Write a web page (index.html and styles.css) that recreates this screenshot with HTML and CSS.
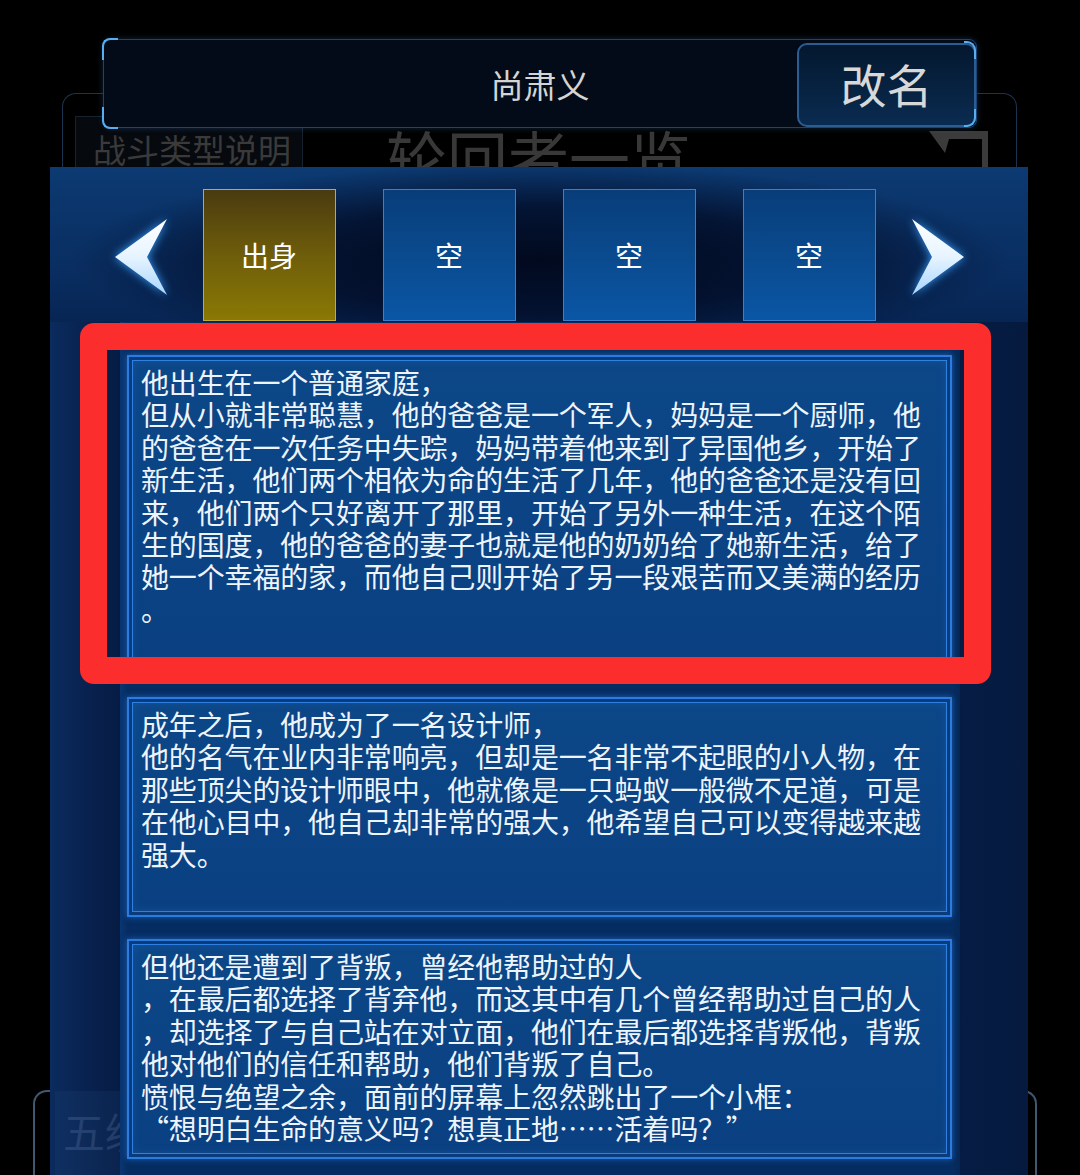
FILE: index.html
```html
<!DOCTYPE html>
<html lang="zh-CN">
<head>
    <meta charset="UTF-8">
    <meta name="viewport" content="width=device-width, initial-scale=1.0">
    <title>轮回者一览</title>
    <link rel="stylesheet" href="styles.css">
</head>
<body>
    <div class="screen">
        <!-- window underneath: the roster list -->
        <div class="window-back">
            <div class="back-tab">战斗类型说明</div>
            <div class="back-title">轮回者一览</div>
            <svg class="back-icon" viewBox="0 0 60 40" width="60" height="40">
                <path d="M0 0 H59 V40 H53 V8 H20 L16 22 Z" fill="#3b3b3b"/>
            </svg>
        </div>
        <div class="window-low"></div>

        <div class="name-bar">
            <span></span>
            <span class="name">尚肃义</span>
            <button class="rename">改名</button>
        </div>

        <div class="panel">
            <div class="ghost-label">五级</div>

            <div class="tabs">
                <svg class="arrow" viewBox="0 0 52 76" width="52" height="76">
                    <defs>
                        <linearGradient id="arrowFill" x1="0" y1="0" x2="0" y2="1">
                            <stop offset="0" stop-color="#ffffff"/>
                            <stop offset="0.5" stop-color="#e6f4ff"/>
                            <stop offset="1" stop-color="#a9d5ff"/>
                        </linearGradient>
                    </defs>
                    <polygon points="52,0 0,38 52,76 32,38" fill="url(#arrowFill)"/>
                </svg>
                <div class="tab-group">
                    <div class="tab tab-active">出身</div>
                    <div class="tab">空</div>
                    <div class="tab">空</div>
                    <div class="tab">空</div>
                </div>
                <svg class="arrow" viewBox="0 0 52 76" width="52" height="76">
                    <polygon points="0,0 52,38 0,76 20,38" fill="url(#arrowFill)"/>
                </svg>
            </div>

            <div class="stories">
                <div class="story story-long">他出生在一个普通家庭，<br>但从小就非常聪慧，他的爸爸是一个军人，妈妈是一个厨师，他<br>的爸爸在一次任务中失踪，妈妈带着他来到了异国他乡，开始了<br>新生活，他们两个相依为命的生活了几年，他的爸爸还是没有回<br>来，他们两个只好离开了那里，开始了另外一种生活，在这个陌<br>生的国度，他的爸爸的妻子也就是他的奶奶给了她新生活，给了<br>她一个幸福的家，而他自己则开始了另一段艰苦而又美满的经历<br>。</div>
                <div class="story">成年之后，他成为了一名设计师，<br>他的名气在业内非常响亮，但却是一名非常不起眼的小人物，在<br>那些顶尖的设计师眼中，他就像是一只蚂蚁一般微不足道，可是<br>在他心目中，他自己却非常的强大，他希望自己可以变得越来越<br>强大。</div>
                <div class="story">但他还是遭到了背叛，曾经他帮助过的人<br>，在最后都选择了背弃他，而这其中有几个曾经帮助过自己的人<br>，却选择了与自己站在对立面，他们在最后都选择背叛他，背叛<br>他对他们的信任和帮助，他们背叛了自己。<br>愤恨与绝望之余，面前的屏幕上忽然跳出了一个小框：<br>“想明白生命的意义吗？想真正地……活着吗？”</div>
            </div>
        </div>

        <div class="highlight"></div>
    </div>
</body>
</html>
```

FILE: styles.css
```css
body {
    margin: 0;
    background-color: #000;
    font-family: "Noto Sans CJK SC", "Noto Sans", sans-serif;
}

.screen {
    position: relative;
    width: 1080px;
    height: 1175px;
    padding-top: 39px;
    box-sizing: border-box;
    overflow: hidden;
}

/* ---- window underneath ---- */
.window-back {
    position: absolute;
    left: 62px;
    top: 93px;
    width: 955px;
    height: 200px;
    border: 1px solid #1c3350;
    border-bottom: none;
    border-radius: 14px 14px 0 0;
    box-sizing: border-box;
}

.back-tab {
    position: absolute;
    left: 12px;
    top: 22px;
    width: 228px;
    height: 70px;
    padding: 10px 0 0 17px;
    box-sizing: border-box;
    border: 1px solid #17222e;
    background-color: #06090e;
    color: #3a3a3a;
    font-size: 33px;
    line-height: 44px;
}

.back-title {
    position: absolute;
    left: 323px;
    top: 32px;
    color: #383838;
    font-size: 61px;
    line-height: 61px;
}

.back-icon {
    position: absolute;
    left: 866px;
    top: 37px;
}

.window-low {
    position: absolute;
    left: 33px;
    top: 1090px;
    width: 1004px;
    height: 120px;
    border: 2px solid rgba(130, 175, 225, 0.5);
    border-bottom: none;
    border-radius: 14px 14px 0 0;
    box-sizing: border-box;
}

/* ---- name bar ---- */
.name-bar {
    position: relative;
    z-index: 2;
    display: grid;
    grid-template-columns: 179px 1fr 179px;
    align-items: center;
    height: 89px;
    margin: 0 103px;
    border: 1.5px solid #1c4470;
    border-radius: 8px;
    background-color: #020b17;
    box-shadow: 0 0 6px rgba(40, 110, 190, 0.35);
    box-sizing: border-box;
}

.name-bar::before,
.name-bar::after {
    content: "";
    position: absolute;
    left: -2px;
    width: 14px;
    height: 20px;
    border-left: 2px solid #5aaef0;
}

.name-bar::before {
    top: -2px;
    border-top: 2px solid #5aaef0;
    border-top-left-radius: 8px;
}

.name-bar::after {
    bottom: -2px;
    border-bottom: 2px solid #5aaef0;
    border-bottom-left-radius: 8px;
}

.name {
    text-align: center;
    color: #d4d4d4;
    font-size: 33px;
    line-height: 40px;
}

.rename {
    position: relative;
    justify-self: end;
    width: 179px;
    height: 84px;
    margin-top: 2px;
    border: 2px solid #2c5d92;
    border-radius: 10px;
    background: linear-gradient(#04182f, #0a2b50);
    color: #d8d8d8;
    font-family: inherit;
    font-size: 46px;
    line-height: 1;
    padding: 0 0 4px;
}

.rename::before,
.rename::after {
    content: "";
    position: absolute;
    right: -2px;
    width: 10px;
    height: 16px;
    border-right: 2px solid #5aaef0;
}

.rename::before {
    top: -4px;
    border-top: 2px solid #5aaef0;
    border-top-right-radius: 9px;
}

.rename::after {
    bottom: -2px;
    border-bottom: 2px solid #5aaef0;
    border-bottom-right-radius: 9px;
}

/* ---- main panel ---- */
.panel {
    position: relative;
    z-index: 1;
    width: 978px;
    height: 1008px;
    margin: 39px 0 0 50px;
    display: flex;
    flex-direction: column;
    background: linear-gradient(90deg, #0b2b5e 0, #071f4a 50px, #061c44 70px, #061c44 910px, #051a3e 978px);
}

.ghost-label {
    position: absolute;
    left: 5px;
    top: 924px;
    width: 120px;
    height: 90px;
    padding: 16px 0 0 8px;
    box-sizing: border-box;
    background-color: rgba(40, 75, 130, 0.18);
    color: rgba(120, 150, 200, 0.22);
    font-size: 42px;
    line-height: 48px;
    white-space: nowrap;
}

.tabs {
    display: flex;
    justify-content: center;
    align-items: flex-start;
    height: 155px;
    padding-top: 22px;
    box-sizing: border-box;
    background:
        radial-gradient(ellipse 48% 62% at 50% 60%, rgba(1, 8, 28, 0.97) 0%, rgba(2, 12, 38, 0.8) 55%, rgba(4, 20, 55, 0) 100%),
        linear-gradient(#0c3a72, #092d60 70%, #072553);
}

.arrow {
    margin-top: 30px;
    filter: drop-shadow(0 0 5px #3aa0ff);
}

.tab-group {
    display: flex;
    gap: 47px;
    margin: 0 36px;
}

.tab {
    display: flex;
    align-items: center;
    justify-content: center;
    width: 133px;
    height: 132px;
    box-sizing: border-box;
    border: 1.5px solid #3a7fcc;
    background: linear-gradient(#083d7a 0%, #0a4a8e 50%, #0a56a6 100%);
    color: #fff;
    font-size: 28px;
}

.tab-active {
    border-color: #c4ac32;
    background: linear-gradient(#4a3b10 0%, #6e5d0a 50%, #8a7904 100%);
}

.stories {
    position: relative;
    flex: 1;
    display: flex;
    flex-direction: column;
    gap: 22px;
    margin: 0 68px 0 70px;
    padding: 33px 8px 0 7px;
    background: linear-gradient(90deg, #0a3672 0, #062d62 8px, #062d62 832px, #052856 840px);
}

.story {
    min-height: 220px;
    padding: 9px 10px 10px 12px;
    box-sizing: border-box;
    border: 2px solid #2b7be0;
    background: linear-gradient(#0c4788, #0a4081);
    box-shadow:
        0 0 6px rgba(40, 140, 255, 0.55),
        inset 0 0 0 3px #0a3c7c,
        inset 0 0 0 4px #2f80e0,
        inset 0 0 12px rgba(60, 150, 255, 0.35);
    color: #eef4fb;
    font-size: 28px;
    line-height: 32.4px;
    letter-spacing: -0.15px;
    white-space: nowrap;
}

.story-long {
    min-height: 320px;
}

/* red marker round the first story */
.highlight {
    position: absolute;
    z-index: 3;
    left: 80px;
    top: 323px;
    width: 911px;
    height: 361px;
    box-sizing: border-box;
    border: 27px solid #fb2d2d;
    border-radius: 14px;
}
```
